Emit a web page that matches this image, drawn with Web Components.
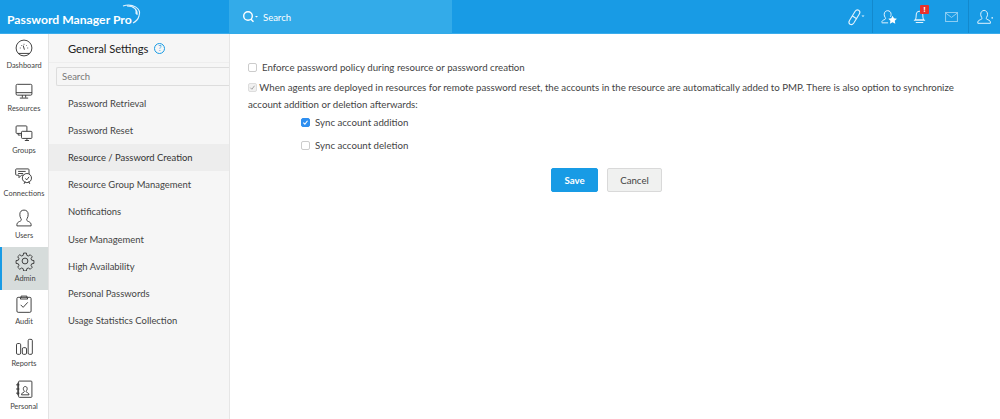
<!DOCTYPE html>
<html>
<head>
<meta charset="utf-8">
<title>Password Manager Pro</title>
<style>
  html, body { margin: 0; height: 100%; }
  body { font-family: "Lato", "Open Sans", sans-serif; color: #333; overflow: hidden; }
  pmp-app { height: 419px; }
</style>
</head>
<body>
<pmp-app>
  <pmp-header slot="header"></pmp-header>
  <pmp-rail slot="rail">
    <pmp-rail-item label="Dashboard" icon="dashboard"></pmp-rail-item>
    <pmp-rail-item label="Resources" icon="resources"></pmp-rail-item>
    <pmp-rail-item label="Groups" icon="groups"></pmp-rail-item>
    <pmp-rail-item label="Connections" icon="connections"></pmp-rail-item>
    <pmp-rail-item label="Users" icon="users"></pmp-rail-item>
    <pmp-rail-item label="Admin" icon="admin" active></pmp-rail-item>
    <pmp-rail-item label="Audit" icon="audit"></pmp-rail-item>
    <pmp-rail-item label="Reports" icon="reports"></pmp-rail-item>
    <pmp-rail-item label="Personal" icon="personal"></pmp-rail-item>
  </pmp-rail>
  <pmp-settings-nav slot="nav">
    <pmp-nav-item>Password Retrieval</pmp-nav-item>
    <pmp-nav-item>Password Reset</pmp-nav-item>
    <pmp-nav-item active>Resource / Password Creation</pmp-nav-item>
    <pmp-nav-item>Resource Group Management</pmp-nav-item>
    <pmp-nav-item>Notifications</pmp-nav-item>
    <pmp-nav-item>User Management</pmp-nav-item>
    <pmp-nav-item>High Availability</pmp-nav-item>
    <pmp-nav-item>Personal Passwords</pmp-nav-item>
    <pmp-nav-item>Usage Statistics Collection</pmp-nav-item>
  </pmp-settings-nav>
  <pmp-form slot="main"></pmp-form>
</pmp-app>

<script>
const ICONS = {
  dashboard: `<circle cx="12" cy="12" r="9.5"/><path d="M5 18.5h14M12 7v1M7 12h1M16 12h1M8.5 8.5l.7.7M15.5 8.5l-.7.7M11 9l1.5 5"/>`,
  resources: `<rect x="2.5" y="4" width="19" height="13" rx="1.5"/><path d="M2.5 14h19M10 17v3M14 17v3M7 20.5h10"/>`,
  groups: `<rect x="2.5" y="3.5" width="13" height="9" rx="1"/><path d="M5 12.5v2h3"/><rect x="9" y="10" width="12.5" height="8.5" rx="1" fill="#fff"/><path d="M13 21h5M15.5 18.5V21"/>`,
  connections: `<path d="M3 3.5h14a1 1 0 0 1 1 1V11H9l-3 3v-3H3a1 1 0 0 1-1-1V4.500a1 1 0 0 1 1-1z"/><path d="M5 6.500h9M5 9h6"/><circle cx="15.500" cy="14.500" r="5.500" fill="#fff"/><path d="M12 21.500l1.500-3M19 21.500l-1.500-3M13.500 15l2 1.500 2.500-3.500"/>`,
  users: `<path d="M3.500 21.500v-2c0-2 2.500-3 4.500-4 1-.5 1-2 .2-3C7.300 11 7 9.500 7 7.500c0-3 2-5 5-5s5 2 5 5c0 2-.3 3.500-1.200 5-.8 1-.8 2.500.2 3 2 1 4.500 2 4.500 4v2z"/>`,
  admin: `<path d="M10.300 2.500h3.400l.5 2.700 1.800.8 2.300-1.500 2.400 2.400-1.500 2.300.8 1.800 2.700.5v3.400l-2.700.5-.8 1.800 1.500 2.300-2.400 2.400-2.300-1.500-1.800.8-.5 2.700h-3.400l-.5-2.700-1.800-.8-2.300 1.500-2.400-2.400 1.500-2.300-.8-1.800-2.700-.5v-3.400l2.700-.5.800-1.800-1.500-2.300 2.400-2.400 2.300 1.500 1.800-.8z"/><circle cx="12" cy="12" r="3.500"/>`,
  audit: `<rect x="3.500" y="4" width="17" height="18" rx="1.500"/><path d="M8.500 4V2.500h7V4l1 2h-9zM8 13l3 3 5.500-6"/>`,
  reports: `<rect x="3" y="9" width="5" height="13" rx="1.500"/><rect x="10" y="14" width="5" height="8" rx="1.500"/><rect x="17" y="4" width="5" height="18" rx="1.500"/>`,
  personal: `<rect x="5.500" y="2.500" width="16" height="19.500" rx="1"/><path d="M9 19c0-2 1.500-2.500 3-3.200.7-.4.500-1.200 0-1.800-.6-.7-.8-1.500-.8-2.500 0-1.500 1-2.500 2.300-2.500s2.300 1 2.300 2.500c0 1-.2 1.800-.8 2.500-.5.600-.7 1.400 0 1.800 1.500.7 3 1.200 3 3.200zM2.500 7h4M2.500 12h4M2.500 17h4M4.500 4.500v15"/>`
};

class PmpApp extends HTMLElement {
  constructor() {
    super();
    this.attachShadow({ mode: "open" });
    this.shadowRoot.innerHTML = `
      <style>
        :host { display: grid; grid-template-columns: 49px 181px 1fr; grid-template-rows: 34px 1fr; }
        .top { grid-column: 1 / -1; display: block; }
      </style>
      <div class="top"><slot name="header"></slot></div>
      <slot name="rail"></slot>
      <slot name="nav"></slot>
      <slot name="main"></slot>
    `;
  }
}

class PmpHeader extends HTMLElement {
  constructor() {
    super();
    this.attachShadow({ mode: "open" });
    this.shadowRoot.innerHTML = `
      <style>
        :host { display: flex; height: 34px; background: #189be5; color: #fff; box-sizing: border-box; border-bottom: 1px solid #3aaceb; }
        .logo { width: 229px; display: flex; align-items: center; padding: 5px 0 0 7px; box-sizing: border-box; font: 700 12.200px "Lato", sans-serif; position: relative; }
        .logo svg { position: absolute; left: 118px; top: 3px; }
        .search { width: 223px; background: #33abe9; display: flex; align-items: center; padding-left: 13px; box-sizing: border-box; font-size: 9.500px; gap: 3px; margin-bottom: -1px; }
        .search svg { flex: none; }
        .fill { flex: 1; }
        .tools { display: flex; height: 33px; }
        .tool { display: flex; align-items: center; justify-content: center; position: relative; width: 32px; box-sizing: border-box; }
        .tool.sep { border-left: 1px solid #1389cd; }
        .badge { position: absolute; left: 16px; top: 5px; width: 9px; height: 9px; background: #e8312c; border-radius: 1px; font: 700 7px/9px "Open Sans", sans-serif; text-align: center; }
        svg { display: block; fill: none; stroke: #e3f3fd; stroke-width: 1.100; }
      </style>
      <div class="logo">Password Manager Pro
        <svg width="24" height="24" viewBox="0 0 24 24" stroke-width=".9"><path d="M5 3C14 0 24 5 21 13 20 17 17 19 15 20M9 3C16 3 20 7 19 12M12 3C17 4 19 7 18 11"/></svg>
      </div>
      <div class="search">
        <svg width="18" height="14" viewBox="0 0 18 14"><circle cx="6" cy="6" r="4.300" stroke="#fff" stroke-width="1.400"/><path d="M9 9.200l2.500 2.500" stroke="#fff" stroke-width="1.500"/><path d="M13 6h3l-1.500 1.500z" fill="#fff" stroke="none"/></svg>
        <span>Search</span>
      </div>
      <div class="fill"></div>
      <div class="tools">
        <div class="tool">
          <svg width="20" height="20" viewBox="0 0 20 20"><path d="M3.500 13.500l5.500-9c1-1.500 2.500-2 3.700-1.300 1.300.8 1.500 2.300.6 3.800l-5.500 9c-1 1.500-2.500 2-3.700 1.300-1.200-.8-1.500-2.300-.6-3.800zM6.500 9l4.500 3"/><path d="M15.500 8.500h3l-1.500 1.500z" fill="#e3f3fd" stroke="none"/></svg>
        </div>
        <div class="tool sep">
          <svg width="18" height="18" viewBox="0 0 20 20"><path d="M2 16c0-2 1.500-2.500 3.500-3.300 1-.5.800-1.500.2-2.300C5 9.500 4.700 8.500 4.700 7c0-2.500 1.700-4 3.800-4s3.800 1.500 3.800 4c0 1-.2 2-.6 2.800M2 16.500h7"/><path d="M14 8.500l1.500 3 3.300.4-2.400 2.300.6 3.300-3-1.600-3 1.600.6-3.300-2.400-2.300 3.300-.4z" fill="#fff" stroke="none"/></svg>
        </div>
        <div class="tool" style="width:31px">
          <svg width="15" height="17" viewBox="0 0 16 18"><path d="M3.500 12.500c1-1 1-3 1-5C4.500 5 6 3.500 8 3.500s3.500 1.500 3.500 4c0 2 0 4 1 5zM2 13h12M4 15.500h8"/></svg>
          <span class="badge">!</span>
        </div>
        <div class="tool" style="width:33px">
          <svg width="13" height="10" viewBox="0 0 14 11" style="opacity:.6"><rect x=".5" y=".5" width="13" height="10"/><path d="M.5 1L7 6l6.500-5"/></svg>
        </div>
        <div class="tool sep">
          <svg width="18" height="18" viewBox="0 0 20 20"><path d="M2 17v-1.500c0-1.500 2.500-2.300 4-3 .8-.4.700-1.500.2-2.200C5.500 9.300 5.200 8.300 5.200 7c0-2.500 1.700-4.300 3.800-4.300s3.800 1.800 3.800 4.300c0 1.300-.3 2.300-1 3.300-.5.700-.6 1.800.2 2.200 1.500.7 4 1.500 4 3V17z"/><circle cx="18" cy="11" r=".9" fill="#e3f3fd" stroke="none"/></svg>
        </div>
      </div>
    `;
  }
}

class PmpRail extends HTMLElement {
  constructor() {
    super();
    this.attachShadow({ mode: "open" });
    this.shadowRoot.innerHTML = `
      <style>
        :host { display: flex; flex-direction: column; background: #fff; border-right: 1px solid #e3e3e3; box-sizing: border-box; height: 385px; overflow: hidden; }
      </style>
      <slot></slot>
    `;
  }
}

class PmpRailItem extends HTMLElement {
  constructor() {
    super();
    this.attachShadow({ mode: "open" });
  }
  connectedCallback() {
    const label = this.getAttribute("label");
    const icon = ICONS[this.getAttribute("icon")];
    this.shadowRoot.innerHTML = `
      <style>
        :host { display: flex; flex-direction: column; align-items: center; height: 42.600px; box-sizing: border-box; padding-top: 4px; font-size: 7.400px; line-height: 10px; color: #444; flex: none; }
        :host([active]) { background: #d6dcdb; border-left: 2px solid #189be5; }
        svg { display: block; width: 20px; height: 20px; fill: none; stroke: #333; stroke-width: 1.100; margin-bottom: 3px; }
      </style>
      <svg viewBox="0 0 24 24">${icon}</svg>
      <span>${label}</span>
    `;
  }
}

class PmpSettingsNav extends HTMLElement {
  constructor() {
    super();
    this.attachShadow({ mode: "open" });
    this.shadowRoot.innerHTML = `
      <style>
        :host { display: flex; flex-direction: column; background: #f6f6f6; border-right: 1px solid #e6e6e6; box-sizing: border-box; height: 385px; }
        .title { height: 28px; display: flex; align-items: center; gap: 6px; padding-left: 19px; font-size: 11.200px; color: #222; border-bottom: 1px solid #eee; box-sizing: content-box; }
        .help { width: 9px; height: 9px; border: 1px solid #189be5; border-radius: 50%; color: #189be5; font-size: 7px; line-height: 9px; text-align: center; }
        .search { margin: 4px 0 0 7px; height: 19px; border: 1px solid #ddd; border-right: 0; border-radius: 2px 0 0 2px; background: #f6f6f6; padding-left: 5px; font-size: 9.500px; line-height: 18px; color: #777; box-sizing: border-box; }
        .list { margin-top: 4px; display: flex; flex-direction: column; }
      </style>
      <div class="title"><span>General Settings</span><span class="help">?</span></div>
      <div class="search">Search</div>
      <div class="list"><slot></slot></div>
    `;
  }
}

class PmpNavItem extends HTMLElement {
  constructor() {
    super();
    this.attachShadow({ mode: "open" });
    this.shadowRoot.innerHTML = `
      <style>
        :host { display: flex; align-items: center; height: 27.100px; padding-left: 19px; font-size: 9.450px; color: #444; }
        :host([active]) { background: #ededed; color: #333; }
      </style>
      <slot></slot>
    `;
  }
}

class PmpCheck extends HTMLElement {
  constructor() {
    super();
    this.attachShadow({ mode: "open" });
    this.shadowRoot.innerHTML = `
      <style>
        :host { display: inline-block; width: 7px; height: 7px; border: 1px solid #ccc; border-radius: 2px; background: #fff; position: relative; vertical-align: -1px; flex: none; }
        :host([checked]) { background: #2f8ff0; border-color: #2f8ff0; }
        :host([disabled]) { background: #f1f1f1; border-color: #ddd; }
        svg { display: none; width: 7px; height: 7px; fill: none; stroke: #fff; stroke-width: 1.300; }
        :host([checked]) svg, :host([disabled]) svg { display: block; }
        :host([disabled]) svg { stroke: #999; stroke-width: 1; }
      </style>
      <svg viewBox="0 0 8 8"><path d="M1.500 4.200l1.800 1.800 3-4"/></svg>
    `;
  }
}

class PmpForm extends HTMLElement {
  constructor() {
    super();
    this.attachShadow({ mode: "open" });
    this.shadowRoot.innerHTML = `
      <style>
        :host { display: block; padding: 26px 30px 0 18px; font-size: 9.700px; color: #444; background: #fff; }
        .row { display: flex; align-items: center; gap: 5px; height: 14px; }
        .para { margin-top: 5px; line-height: 17px; }
        .sub { padding-left: 53px; display: flex; flex-direction: column; gap: 9px; margin-top: 2px; }
        .actions { display: flex; gap: 9px; margin-top: 16px; margin-left: 303px; }
        button { font: inherit; font-size: 9.700px; width: 47px; height: 24px; border-radius: 2px; padding: 0; }
        .save { background: #189be5; color: #fff; border: 1px solid #189be5; font-weight: 700; }
        .cancel { background: #f0f1f0; color: #444; border: 1px solid #d9d9d9; width: 55px; }
      </style>
      <div class="row"><pmp-check></pmp-check><span>Enforce password policy during resource or password creation</span></div>
      <div class="para"><pmp-check checked disabled></pmp-check> When agents are deployed in resources for remote password reset, the accounts in the resource are automatically added to PMP. There is also option to synchronize account addition or deletion afterwards:</div>
      <div class="sub">
        <div class="row"><pmp-check checked></pmp-check><span>Sync account addition</span></div>
        <div class="row"><pmp-check></pmp-check><span>Sync account deletion</span></div>
      </div>
      <div class="actions">
        <button class="save">Save</button>
        <button class="cancel">Cancel</button>
      </div>
    `;
  }
}

customElements.define("pmp-app", PmpApp);
customElements.define("pmp-header", PmpHeader);
customElements.define("pmp-rail", PmpRail);
customElements.define("pmp-rail-item", PmpRailItem);
customElements.define("pmp-settings-nav", PmpSettingsNav);
customElements.define("pmp-nav-item", PmpNavItem);
customElements.define("pmp-check", PmpCheck);
customElements.define("pmp-form", PmpForm);
</script>
</body>
</html>
